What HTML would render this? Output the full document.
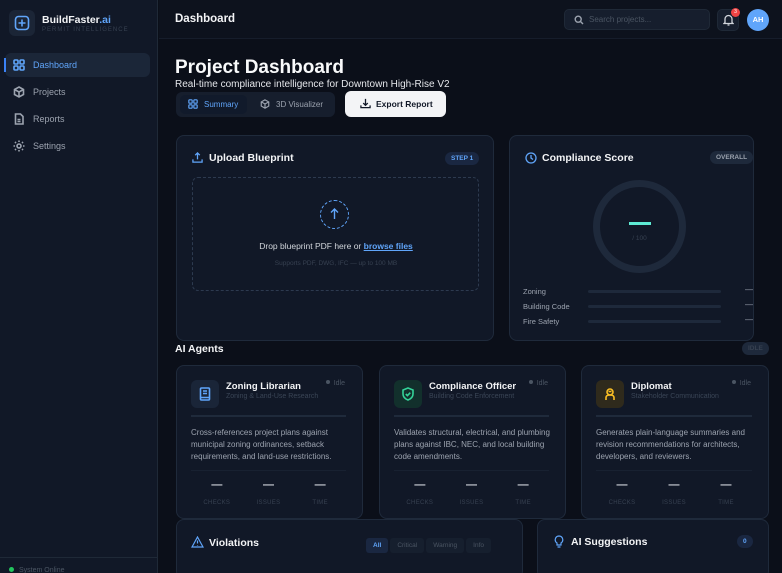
<!DOCTYPE html>
<html><head><meta charset="utf-8"><style>
*{box-sizing:border-box;margin:0;padding:0}
html,body{width:782px;height:573px;overflow:hidden}
body{background:#0b0f19;font-family:"Liberation Sans",sans-serif;color:#e5e7eb;position:relative}
.abs{position:absolute}
.sb{left:0;top:0;width:158px;height:573px;background:#111827;border-right:1px solid #1f2937}
.nav{position:absolute;left:5px;width:145px;height:24px;border-radius:6px;font-size:9px;color:#9ca3af;display:flex;align-items:center;padding-left:8px;gap:8px}
.nav svg{width:12px;height:12px;stroke:#9ca3af;fill:none;stroke-width:1.6}
.card{position:absolute;background:#111827;border:1px solid #1f2a3b;border-radius:8px}
.h{font-size:10.5px;font-weight:bold;color:#f3f4f6}
.pill{position:absolute;font-size:6.5px;font-weight:bold;border-radius:8px;padding:3px 6px;background:#1e293b;color:#9ca3af}
.ag-ic{position:absolute;left:14px;top:14px;width:28px;height:28px;border-radius:6px;display:flex;align-items:center;justify-content:center}
.ag-ic svg{width:14px;height:14px;fill:none;stroke-width:1.6}
.agt{position:absolute;left:49px;top:15px;font-size:9.5px;font-weight:bold;color:#f3f4f6}
.ags{position:absolute;left:49px;top:27px;font-size:7px;color:#3a4556}
.idle{position:absolute;right:17px;top:14px;font-size:7px;color:#4b5563}
.idle:before{content:"";display:inline-block;width:4px;height:4px;border-radius:50%;background:#4b5563;margin-right:4px;vertical-align:1px}
.hr{position:absolute;left:14px;right:16px;height:2px;background:#1f2a3b}
.desc{position:absolute;left:14px;right:10px;top:61px;font-size:8px;line-height:12px;color:#9ca3af}
.stats{position:absolute;left:14px;right:16px;top:113px;display:flex;justify-content:space-around}
.st{text-align:center;width:50px}
.st b{display:block;font-size:11px;color:#d1d5db;line-height:12px}
.st span{font-size:6px;color:#374151;letter-spacing:.3px}
.bar{position:absolute;left:588px;width:133px;height:3px;border-radius:2px;background:#1e293b}
.bl{position:absolute;left:523px;font-size:7.5px;color:#9ca3af}
.bd{position:absolute;left:745px;font-size:8px;color:#9ca3af}
.fb{display:inline-block;font-size:6.5px;padding:4px 7px;border-radius:3px;background:#161f2e;color:#4b5563;margin-left:2px}
</style></head><body>
<div class="abs sb">
 <div class="abs" style="left:9px;top:10px;width:26px;height:26px;border-radius:6px;background:#1b2536;display:flex;align-items:center;justify-content:center">
  <svg width="16" height="16" viewBox="0 0 16 16" fill="none" stroke="#60a5fa" stroke-width="1.6"><rect x="1.5" y="1.5" width="13" height="13" rx="3"/><path d="M8 4.5v7M4.5 8h7"/></svg></div>
 <div class="abs" style="left:42px;top:14px;font-size:10.5px;font-weight:bold;color:#f3f4f6">BuildFaster<span style="color:#60a5fa">.ai</span></div>
 <div class="abs" style="left:42px;top:27px;font-size:6px;letter-spacing:1px;color:#374151">PERMIT INTELLIGENCE</div>
 <div class="nav" style="top:53px;background:#1b2638;color:#60a5fa"><span class="abs" style="left:-1px;top:5px;width:2px;height:14px;background:#3b82f6"></span><svg viewBox="0 0 12 12" style="stroke:#60a5fa"><rect x="1" y="1" width="4" height="4" rx="1"/><rect x="7" y="1" width="4" height="4" rx="1"/><rect x="1" y="7" width="4" height="4" rx="1"/><rect x="7" y="7" width="4" height="4" rx="1"/></svg>Dashboard</div>
 <div class="nav" style="top:80px"><svg viewBox="0 0 12 12"><path d="M6 1l4.5 2.5v5L6 11 1.5 8.5v-5z M1.5 3.5L6 6l4.5-2.5M6 6v5"/></svg>Projects</div>
 <div class="nav" style="top:107px"><svg viewBox="0 0 12 12"><path d="M2.5 1h5l2.5 2.5V11h-7.5z M4.5 6.5h3M4.5 8.5h3"/></svg>Reports</div>
 <div class="nav" style="top:134px"><svg viewBox="0 0 12 12"><circle cx="6" cy="6" r="2"/><path d="M6 .5v1.5M6 10v1.5M.5 6H2M10 6h1.5M2 2l1 1M9 9l1 1M2 10l1-1M9 3l1-1"/></svg>Settings</div>
 <div class="abs" style="left:0;right:0;top:557px;height:1px;background:#1f2937"></div>
 <div class="abs" style="left:9px;top:567px;font-size:7px;color:#4b5563"><span style="display:inline-block;width:5px;height:5px;border-radius:50%;background:#22c55e;margin-right:5px"></span>System Online</div>
</div>
<div class="abs" style="left:159px;top:0;width:623px;height:39px;border-bottom:1px solid #161d2b;background:#0d121d"></div>
<div class="abs" style="left:175px;top:13px;font-size:11.5px;font-weight:bold;color:#f3f4f6">Dashboard</div>
<div class="abs" style="left:564px;top:9px;width:146px;height:21px;border-radius:5px;background:#161e2d;border:1px solid #1f2937;font-size:8px;color:#4b5563;padding:5px 0 0 24px">Search projects...
 <svg class="abs" style="left:9px;top:5px" width="10" height="10" viewBox="0 0 10 10" fill="none" stroke="#9ca3af" stroke-width="1.4"><circle cx="4.2" cy="4.2" r="3"/><path d="M6.5 6.5L9 9"/></svg></div>
<div class="abs" style="left:717px;top:9px;width:22px;height:22px;border-radius:5px;background:#161e2d;border:1px solid #1f2937">
 <svg class="abs" style="left:5px;top:4px" width="11" height="12" viewBox="0 0 11 12" fill="none" stroke="#d1d5db" stroke-width="1.3"><path d="M2 8.5V5a3.5 3.5 0 017 0v3.5l1 1H1z M4.5 11h2"/></svg>
 <div class="abs" style="left:13px;top:-2px;width:9px;height:9px;border-radius:50%;background:#ef4444;font-size:5px;color:#fff;text-align:center;line-height:9px">3</div></div>
<div class="abs" style="left:747px;top:9px;width:22px;height:22px;border-radius:50%;background:#60a5fa;font-size:7.5px;font-weight:bold;color:#fff;text-align:center;line-height:22px">AH</div>

<div class="abs" style="left:175px;top:57px;font-size:19px;font-weight:bold;color:#f9fafb">Project Dashboard</div>
<div class="abs" style="left:175px;top:79px;font-size:10px;color:#e5e7eb">Real-time compliance intelligence for Downtown High-Rise V2</div>
<div class="abs" style="left:176px;top:92px;width:159px;height:25px;border-radius:6px;background:#161e2d"></div>
<div class="abs" style="left:180px;top:95px;width:67px;height:19px;border-radius:5px;background:#111a2b;font-size:8px;color:#60a5fa;padding:5px 0 0 24px">Summary
 <svg class="abs" style="left:8px;top:4px" width="10" height="10" viewBox="0 0 12 12" fill="none" stroke="#60a5fa" stroke-width="1.4"><rect x="1" y="1" width="4" height="4" rx="1"/><rect x="7" y="1" width="4" height="4" rx="1"/><rect x="1" y="7" width="4" height="4" rx="1"/><rect x="7" y="7" width="4" height="4" rx="1"/></svg></div>
<div class="abs" style="left:260px;top:100px;font-size:8px;color:#9ca3af;padding-left:16px">3D Visualizer
 <svg class="abs" style="left:0;top:-1px" width="10" height="10" viewBox="0 0 12 12" fill="none" stroke="#9ca3af" stroke-width="1.4"><path d="M6 1l4.5 2.5v5L6 11 1.5 8.5v-5z M1.5 3.5L6 6l4.5-2.5M6 6v5"/></svg></div>
<div class="abs" style="left:345px;top:91px;width:101px;height:26px;border-radius:6px;background:#f3f4f6;font-size:8.5px;font-weight:bold;color:#111827;padding:8px 0 0 31px">Export Report
 <svg class="abs" style="left:15px;top:7px" width="11" height="11" viewBox="0 0 12 12" fill="none" stroke="#111827" stroke-width="1.4"><path d="M6 1v7M3.5 5.5L6 8l2.5-2.5M1 8v2.5h10V8"/></svg></div>

<div class="card" style="left:176px;top:135px;width:318px;height:206px">
 <svg class="abs" style="left:15px;top:16px" width="11" height="11" viewBox="0 0 12 12" fill="none" stroke="#60a5fa" stroke-width="1.4"><path d="M6 8V1M3.5 3.5L6 1l2.5 2.5M1 8v3h10V8"/></svg>
 <div class="abs h" style="left:32px;top:16px">Upload Blueprint</div>
 <div class="pill" style="left:268px;top:16px;color:#60a5fa;background:#1a2741">STEP 1</div>
 <div class="abs" style="left:15px;top:41px;width:287px;height:114px;border:1px dashed #2d3a4f;border-radius:6px"></div>
 <div class="abs" style="left:143px;top:64px;width:29px;height:29px;border-radius:50%;border:1.5px dashed #60a5fa"></div>
 <svg class="abs" style="left:152px;top:72px" width="11" height="12" viewBox="0 0 11 12" fill="none" stroke="#60a5fa" stroke-width="1.4"><path d="M5.5 11V1M2 4.5L5.5 1 9 4.5"/></svg>
 <div class="abs" style="left:0;width:318px;top:105px;text-align:center;font-size:8.5px;color:#d1d5db">Drop blueprint PDF here or <b style="color:#60a5fa;text-decoration:underline">browse files</b></div>
 <div class="abs" style="left:0;width:318px;top:124px;text-align:center;font-size:6.5px;color:#374151">Supports PDF, DWG, IFC — up to 100 MB</div>
</div>
<div class="card" style="left:509px;top:135px;width:245px;height:206px">
 <svg class="abs" style="left:15px;top:16px" width="12" height="12" viewBox="0 0 12 12" fill="none" stroke="#60a5fa" stroke-width="1.3"><circle cx="6" cy="6" r="5"/><path d="M6 3v3l2 1.5"/></svg>
 <div class="abs h" style="left:32px;top:16px">Compliance Score</div>
 <div class="pill" style="left:200px;top:15px">OVERALL</div>
 <div class="abs" style="left:83px;top:44px;width:93px;height:93px;border-radius:50%;border:7px solid #1e293b"></div>
 <div class="abs" style="left:119px;top:86px;width:22px;height:3px;background:#5eead4"></div>
 <div class="abs" style="left:0;width:259px;top:99px;text-align:center;font-size:6.5px;color:#374151">/ 100</div>
</div>
<div class="bl" style="top:287px">Zoning</div><div class="bar" style="top:290px"></div><div class="bd" style="top:285px">—</div>
<div class="bl" style="top:302px">Building Code</div><div class="bar" style="top:305px"></div><div class="bd" style="top:300px">—</div>
<div class="bl" style="top:317px">Fire Safety</div><div class="bar" style="top:320px"></div><div class="bd" style="top:315px">—</div>

<div class="abs h" style="left:175px;top:343px">AI Agents</div>
<div class="pill" style="left:742px;top:342px;color:#374151">IDLE</div>

<div class="card" style="left:176px;top:365px;width:187px;height:154px">
 <div class="ag-ic" style="background:#1a2538"><svg viewBox="0 0 14 14" stroke="#60a5fa"><rect x="2.5" y="1" width="9" height="12" rx="1"/><path d="M5 4h4M5 6.5h4M2.5 10.5h9"/></svg></div>
 <div class="agt">Zoning Librarian</div><div class="ags">Zoning &amp; Land-Use Research</div><div class="idle">Idle</div>
 <div class="hr" style="top:49px"></div>
 <div class="desc">Cross-references project plans against municipal zoning ordinances, setback requirements, and land-use restrictions.</div>
 <div class="hr" style="top:104px;height:1px;background:#182131"></div>
 <div class="stats"><div class="st"><b>—</b><span>CHECKS</span></div><div class="st"><b>—</b><span>ISSUES</span></div><div class="st"><b>—</b><span>TIME</span></div></div>
</div>
<div class="card" style="left:379px;top:365px;width:187px;height:154px">
 <div class="ag-ic" style="background:#12302c"><svg viewBox="0 0 14 14" stroke="#34d399"><path d="M7 1l5 2v4c0 3-2.5 5-5 6-2.5-1-5-3-5-6V3z M4.8 7l1.6 1.6L9.3 5.7"/></svg></div>
 <div class="agt">Compliance Officer</div><div class="ags">Building Code Enforcement</div><div class="idle">Idle</div>
 <div class="hr" style="top:49px"></div>
 <div class="desc">Validates structural, electrical, and plumbing plans against IBC, NEC, and local building code amendments.</div>
 <div class="hr" style="top:104px;height:1px;background:#182131"></div>
 <div class="stats"><div class="st"><b>—</b><span>CHECKS</span></div><div class="st"><b>—</b><span>ISSUES</span></div><div class="st"><b>—</b><span>TIME</span></div></div>
</div>
<div class="card" style="left:581px;top:365px;width:188px;height:154px">
 <div class="ag-ic" style="background:#2f2a1c"><svg viewBox="0 0 14 14" stroke="#fbbf24"><circle cx="7" cy="5" r="3"/><path d="M5.5 4.5h3M3 13v-2.5c0-1.5 1.5-2.5 4-2.5s4 1 4 2.5V13"/></svg></div>
 <div class="agt">Diplomat</div><div class="ags">Stakeholder Communication</div><div class="idle">Idle</div>
 <div class="hr" style="top:49px"></div>
 <div class="desc">Generates plain-language summaries and revision recommendations for architects, developers, and reviewers.</div>
 <div class="hr" style="top:104px;height:1px;background:#182131"></div>
 <div class="stats"><div class="st"><b>—</b><span>CHECKS</span></div><div class="st"><b>—</b><span>ISSUES</span></div><div class="st"><b>—</b><span>TIME</span></div></div>
</div>

<div class="card" style="left:176px;top:519px;width:347px;height:60px">
 <svg class="abs" style="left:14px;top:16px" width="13" height="12" viewBox="0 0 13 12" fill="none" stroke="#60a5fa" stroke-width="1.2"><path d="M6.5 1L12 11H1z M6.5 4.5v3M6.5 9v.5"/></svg>
 <div class="abs h" style="left:32px;top:17px">Violations</div>
 <div class="abs" style="left:187px;top:14px"><span class="fb" style="background:#1a2741;color:#60a5fa;font-weight:bold">All</span><span class="fb">Critical</span><span class="fb">Warning</span><span class="fb">Info</span></div>
</div>
<div class="card" style="left:537px;top:519px;width:232px;height:60px">
 <svg class="abs" style="left:16px;top:15px" width="10" height="13" viewBox="0 0 10 13" fill="none" stroke="#60a5fa" stroke-width="1.2"><path d="M5 1a3.8 3.8 0 00-2 7v2h4V8a3.8 3.8 0 00-2-7z M3.5 12h3"/></svg>
 <div class="abs h" style="left:33px;top:16px">AI Suggestions</div>
 <div class="pill" style="left:199px;top:15px;color:#60a5fa;background:#1a2741">0</div>
</div>
</body></html>
